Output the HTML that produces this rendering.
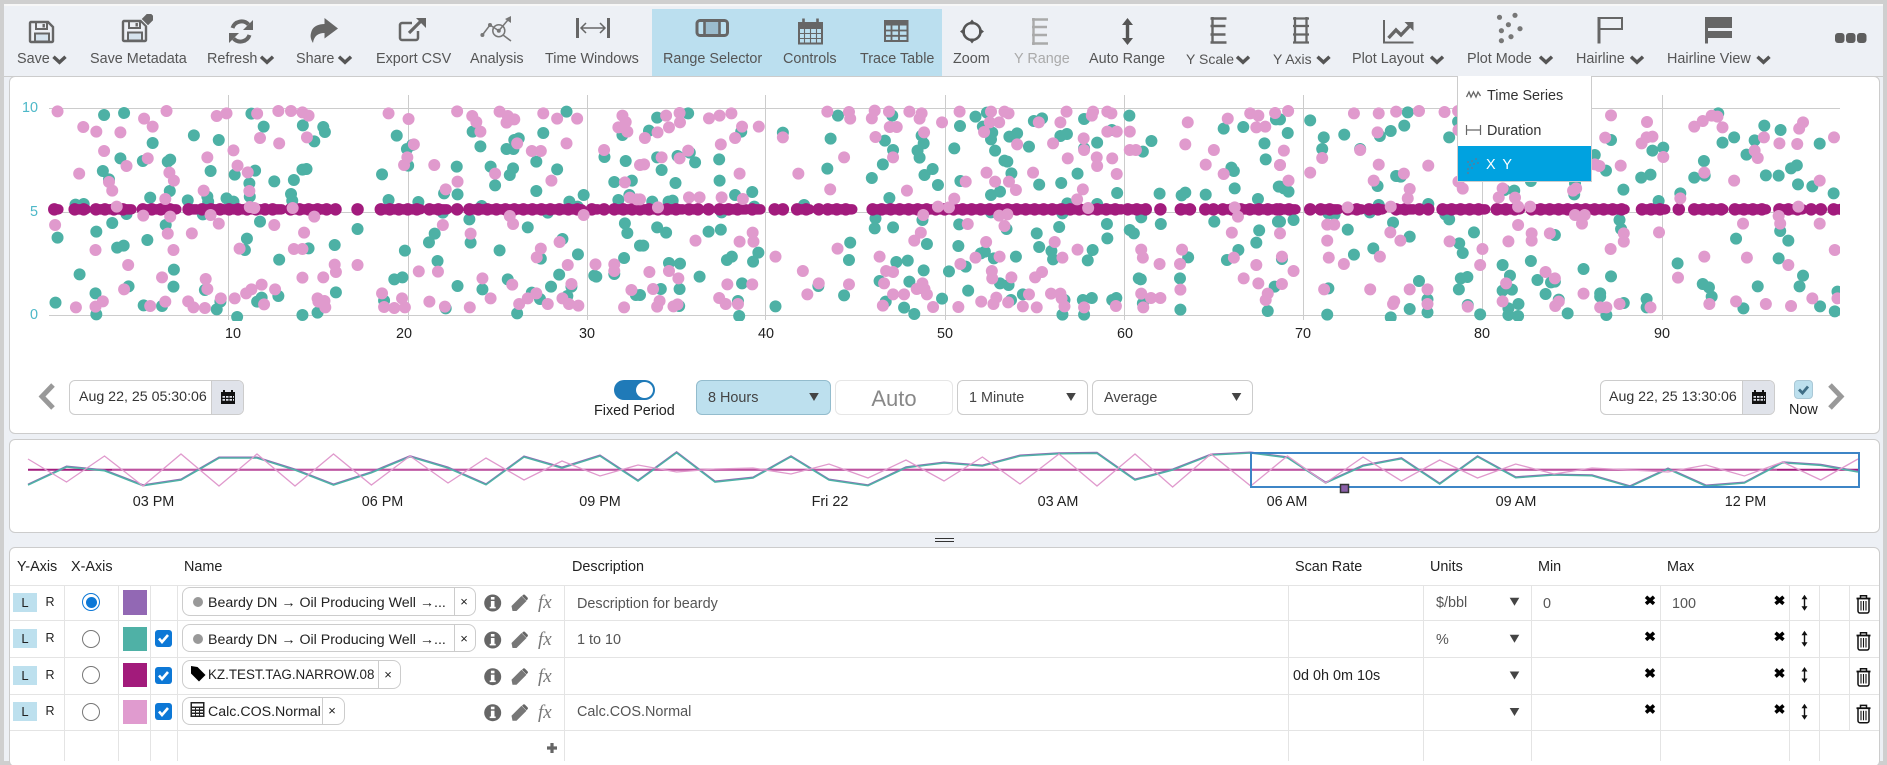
<!DOCTYPE html>
<html lang="en"><head><meta charset="utf-8"><title>Trend</title>
<style>
html,body{margin:0;padding:0;width:1887px;height:765px;overflow:hidden;background:#edf0f5}
body{position:relative;font-family:"Liberation Sans",sans-serif;font-size:14.4px;color:#222}
.a{position:absolute}
.t{position:absolute;white-space:nowrap;line-height:20px;height:20px}
.c{transform:translateX(-50%)}
.tb{color:#555}
.panel{position:absolute;background:#fff;border:1px solid #ccc;border-radius:6px;box-sizing:border-box}
.box{position:absolute;box-sizing:border-box;border:1px solid #ccc;border-radius:6px;background:#fff}
.vl{position:absolute;width:1px;background:#e4e4e4}
.hl{position:absolute;height:1px;left:10px;width:1869px;background:#e4e4e4}
.pill{position:absolute;box-sizing:border-box;border:1px solid #ccc;border-radius:8px;background:#fff;left:182px}
.L{position:absolute;left:13px;width:24px;height:19px;background:#bde0ee;text-align:center;line-height:19px;font-size:13px}
.R{position:absolute;left:45px;width:10px;height:19px;line-height:19px;font-size:12.5px;text-align:center}
.sw{position:absolute;left:123px;width:24px;height:24px}
.rad{position:absolute;left:82px;width:16px;height:16px;border:1.5px solid #777;border-radius:50%;background:#fff}
.cb{position:absolute;left:155px;width:17px;height:17px;border-radius:3px;background:#0d78d6}
.fx{position:absolute;left:538px;font:italic 19px "Liberation Serif",serif;color:#777;line-height:20px}
.g{color:#555}
</style></head><body>
<div class="a" style="left:0;top:0;width:1887px;height:4px;background:#cfcfcf"></div>
<div class="a" style="left:0;top:4px;width:1887px;height:2px;background:#f7f7f7"></div>
<div class="a" style="left:0;top:0;width:4px;height:765px;background:#cfcfcf"></div>
<div class="a" style="left:1883px;top:0;width:4px;height:765px;background:#cfcfcf"></div>
<div class="a" style="left:0;top:761px;width:1887px;height:4px;background:#cfcfcf"></div>
<div class="a" style="left:652px;top:9px;width:290px;height:67px;background:#bbdfef"></div>
<div class="a" style="left:4px;top:76px;width:1879px;height:1px;background:#ccc"></div>

<div class="panel" style="left:9px;top:76px;width:1871px;height:358px"></div>
<div class="panel" style="left:9px;top:439px;width:1871px;height:94px"></div>
<div class="panel" style="left:9px;top:547px;width:1871px;height:220px"></div>
<div class="a" style="left:935px;top:538px;width:19px;height:1px;background:#333"></div>
<div class="a" style="left:935px;top:541px;width:19px;height:1px;background:#333"></div>

<!-- toolbar labels -->
<span class="t tb" style="left:17px;top:49px">Save</span>
<span class="t tb" style="left:90px;top:49px">Save Metadata</span>
<span class="t tb" style="left:207px;top:49px">Refresh</span>
<span class="t tb" style="left:296px;top:49px">Share</span>
<span class="t tb" style="left:376px;top:49px">Export CSV</span>
<span class="t tb" style="left:470px;top:49px">Analysis</span>
<span class="t tb" style="left:545px;top:49px">Time Windows</span>
<span class="t tb" style="left:663px;top:49px">Range Selector</span>
<span class="t tb" style="left:783px;top:49px">Controls</span>
<span class="t tb" style="left:860px;top:49px">Trace Table</span>
<span class="t tb" style="left:953px;top:49px">Zoom</span>
<span class="t" style="left:1014px;top:49px;color:#aaa">Y Range</span>
<span class="t tb" style="left:1089px;top:49px">Auto Range</span>
<span class="t tb" style="left:1186px;top:49px;font-size:14px">Y Scale</span>
<span class="t tb" style="left:1273px;top:49px;font-size:14px">Y Axis</span>
<span class="t tb" style="left:1352px;top:49px">Plot Layout</span>
<span class="t tb" style="left:1467px;top:49px">Plot Mode</span>
<span class="t tb" style="left:1576px;top:49px">Hairline</span>
<span class="t tb" style="left:1667px;top:49px">Hairline View</span>

<!-- controls -->
<div class="box" style="left:69px;top:380px;width:175px;height:35px"></div>
<div class="a" style="left:211px;top:381px;width:32px;height:33px;background:#e0e3ea;border-left:1px solid #ccc;border-radius:0 5px 5px 0;box-sizing:border-box"></div>
<span class="t" style="left:79px;top:387px;color:#333;font-size:14.2px">Aug 22, 25 05:30:06</span>
<div class="a" style="left:614px;top:380px;width:41px;height:20px;background:#1f7ab8;border-radius:10px"></div>
<div class="a" style="left:636px;top:382px;width:17px;height:16px;background:#fff;border-radius:50%"></div>
<span class="t" style="left:594px;top:401px">Fixed Period</span>
<div class="box" style="left:696px;top:380px;width:135px;height:35px;background:#bde0ee;border-color:#93bccd"></div>
<span class="t" style="left:708px;top:388px;color:#444">8 Hours</span>
<div class="box" style="left:835px;top:380px;width:118px;height:35px;border-color:#e6e6e6"></div>
<span class="t c" style="left:894px;top:389px;color:#888;font-size:22px">Auto</span>
<div class="box" style="left:957px;top:380px;width:131px;height:35px"></div>
<span class="t" style="left:969px;top:388px;color:#444">1 Minute</span>
<div class="box" style="left:1092px;top:380px;width:161px;height:35px"></div>
<span class="t" style="left:1104px;top:388px;color:#444">Average</span>
<div class="box" style="left:1600px;top:380px;width:175px;height:35px"></div>
<div class="a" style="left:1742px;top:381px;width:32px;height:33px;background:#e0e3ea;border-left:1px solid #ccc;border-radius:0 5px 5px 0;box-sizing:border-box"></div>
<span class="t" style="left:1609px;top:387px;color:#333;font-size:14.2px">Aug 22, 25 13:30:06</span>
<div class="a" style="left:1794px;top:380px;width:19px;height:19px;background:#bde0ee;border:1px solid #aac8d6;border-radius:4px;box-sizing:border-box"></div>
<span class="t" style="left:1789px;top:400px">Now</span>

<!-- table -->
<div class="hl" style="top:585px"></div><div class="hl" style="top:620px"></div><div class="hl" style="top:657px"></div><div class="hl" style="top:694px"></div><div class="hl" style="top:730px"></div>
<div class="vl" style="left:64px;top:585px;height:176px"></div>
<div class="vl" style="left:118px;top:585px;height:176px"></div>
<div class="vl" style="left:150px;top:585px;height:176px"></div>
<div class="vl" style="left:177px;top:585px;height:176px"></div>
<div class="vl" style="left:564px;top:585px;height:176px"></div>
<div class="vl" style="left:1288px;top:585px;height:176px"></div>
<div class="vl" style="left:1423px;top:585px;height:176px"></div>
<div class="vl" style="left:1531px;top:585px;height:176px"></div>
<div class="vl" style="left:1660px;top:585px;height:176px"></div>
<div class="vl" style="left:1789px;top:585px;height:176px"></div>
<div class="vl" style="left:1819px;top:585px;height:176px"></div>
<div class="vl" style="left:1849px;top:585px;height:145px"></div>

<span class="t" style="left:17px;top:557px">Y-Axis</span>
<span class="t" style="left:71px;top:557px">X-Axis</span>
<span class="t" style="left:184px;top:557px">Name</span>
<span class="t" style="left:572px;top:557px">Description</span>
<span class="t" style="left:1295px;top:557px">Scan Rate</span>
<span class="t" style="left:1430px;top:557px">Units</span>
<span class="t" style="left:1538px;top:557px">Min</span>
<span class="t" style="left:1667px;top:557px">Max</span>

<div class="L" style="top:593px">L</div><div class="R" style="top:593px">R</div>
<div class="L" style="top:629px">L</div><div class="R" style="top:629px">R</div>
<div class="L" style="top:666px">L</div><div class="R" style="top:666px">R</div>
<div class="L" style="top:702px">L</div><div class="R" style="top:702px">R</div>

<div class="rad" style="top:593px;border-color:#0d78d6"></div>
<div class="a" style="left:86px;top:597px;width:11px;height:11px;background:#0d78d6;border-radius:50%"></div>
<div class="rad" style="top:630px"></div><div class="rad" style="top:666px"></div><div class="rad" style="top:703px"></div>

<div class="sw" style="top:590px;background:#9268b4;height:25px"></div>
<div class="sw" style="top:627px;background:#4fb1a6"></div>
<div class="sw" style="top:663px;background:#a21b7b"></div>
<div class="sw" style="top:700px;background:#e09bcf"></div>

<div class="cb" style="top:630px"></div><div class="cb" style="top:667px"></div><div class="cb" style="top:703px"></div>

<div class="pill" style="top:587px;width:294px;height:29px"></div>
<div class="pill" style="top:624px;width:294px;height:28px"></div>
<div class="pill" style="top:660px;width:219px;height:29px"></div>
<div class="pill" style="top:697px;width:163px;height:28px"></div>
<div class="vl" style="left:454px;top:588px;height:27px;background:#ccc"></div>
<div class="vl" style="left:454px;top:625px;height:26px;background:#ccc"></div>
<div class="vl" style="left:378px;top:661px;height:27px;background:#ccc"></div>
<div class="vl" style="left:322px;top:698px;height:26px;background:#ccc"></div>
<div class="a" style="left:193px;top:597px;width:10px;height:10px;background:#999;border-radius:50%"></div>
<div class="a" style="left:193px;top:634px;width:10px;height:10px;background:#999;border-radius:50%"></div>
<span class="t" style="left:208px;top:593px;font-size:14.2px">Beardy DN → Oil Producing Well →...</span>
<span class="t" style="left:208px;top:630px;font-size:14.2px">Beardy DN → Oil Producing Well →...</span>
<span class="t" style="left:208px;top:665px;font-size:13.4px">KZ.TEST.TAG.NARROW.08</span>
<span class="t" style="left:208px;top:702px;font-size:14.2px">Calc.COS.Normal</span>
<span class="t c" style="left:464px;top:592px;font-size:13px">×</span>
<span class="t c" style="left:464px;top:629px;font-size:13px">×</span>
<span class="t c" style="left:388px;top:665px;font-size:13px">×</span>
<span class="t c" style="left:332px;top:701px;font-size:13px">×</span>
<span class="fx" style="top:593px">fx</span><span class="fx" style="top:630px">fx</span><span class="fx" style="top:667px">fx</span><span class="fx" style="top:703px">fx</span>

<span class="t g" style="left:577px;top:594px">Description for beardy</span>
<span class="t g" style="left:577px;top:630px">1 to 10</span>
<span class="t g" style="left:577px;top:702px">Calc.COS.Normal</span>
<span class="t" style="left:1293px;top:666px">0d 0h 0m 10s</span>
<span class="t g" style="left:1436px;top:593px">$/bbl</span>
<span class="t g" style="left:1436px;top:630px">%</span>
<span class="t g" style="left:1543px;top:594px">0</span>
<span class="t g" style="left:1672px;top:594px">100</span>

<!-- graphics -->
<svg class="a" style="left:0;top:0" width="1887" height="765" viewBox="0 0 1887 765" xmlns="http://www.w3.org/2000/svg">
<defs>
<clipPath id="pc"><rect x="44" y="95" width="1796" height="226"/></clipPath>
<g id="floppy">
<path d="M31 22h17l5 5v14a1 1 0 0 1-1 1H31a1 1 0 0 1-1-1V23a1 1 0 0 1 1-1z" fill="#edf0f5" stroke="#666" stroke-width="2.4"/>
<path d="M36 22v7h11v-7" fill="none" stroke="#666" stroke-width="2"/><rect x="42.5" y="24" width="2.4" height="3.5" fill="#666"/>
<rect x="35" y="33.5" width="14" height="8" fill="#d6e3ee" stroke="#666" stroke-width="2"/>
</g>
<path id="cal" d="M0 3h2V1h2v2h6V1h2v2h2v12H0z M1.500 7v1.800h2.500V7z M5 7v1.800h2.500V7z M8.500 7v1.800H11V7z M12 7v1.800h1V7z M1.500 10v1.800h2.500V10z M5 10v1.800h2.500V10z M8.500 10v1.800H11V10z M12 10v1.800h1V10z" fill="#111" fill-rule="evenodd"/>
<g id="info"><circle r="8.500" fill="#666"/><rect x="-1.800" y="-2" width="3.600" height="7" fill="#fff"/><rect x="-1.800" y="-6" width="3.600" height="2.600" fill="#fff"/><rect x="-3" y="3.800" width="6" height="1.600" fill="#fff"/></g>
<g id="pencil"><path d="M-7 8L-8 3L2-7L7-2L-3 8Z" fill="#777"/><path d="M3.500-8a1.500 1.500 0 0 1 2 0L8-5.500a1.500 1.500 0 0 1 0 2L7-2.500L2.500-7z" fill="#666"/></g>
<path id="xx" d="M-4-3.500L4 3.500M4-3.500L-4 3.500" stroke="#000" stroke-width="3.500" fill="none"/>
<g id="ud"><rect x="-.7" y="-5" width="1.400" height="10" fill="#111"/><path d="M0-8L3-3.500H-3zM0 8L3 3.500H-3z" fill="#111"/></g>
<g id="trash" fill="none" stroke="#111"><path d="M-5.500-5.500V7a2 2 0 0 0 2 2h7a2 2 0 0 0 2-2V-5.500" stroke-width="1.500"/><path d="M-7-5.500H7" stroke-width="1.800"/><path d="M-3-6V-8.300H3V-6" stroke-width="1.500"/><path d="M-2.500-3V6.500M0-3V6.500M2.500-3V6.500" stroke-width="1.100"/></g>
<path id="chev" d="M-6-2.800L0 2.800L6-2.800" fill="none" stroke="#555" stroke-width="3.400"/>
<path id="caret" d="M-4.800-4H4.800L0 4z" fill="#444"/>
<path id="chk" d="M-4.500 0L-1.500 3.500L4.500-3.500" fill="none" stroke="#fff" stroke-width="2.600"/>
<g id="band" fill="none">
<path transform="translate(0,80) scale(.40816,.33333)" vector-effect="non-scaling-stroke" d="M133 388H143M183 388H210M235 388H322M350 388H432M462 388H482M495 388H650M668 388H690M712 388H805M822 388h1M876 388h1M933 388H1030M1052 388H1095M1120 388h1M1150 388H1425M1450 388H1465M1480 388h1M1505 388H1568"/>
<path transform="translate(640,80) scale(.40816,.33333)" vector-effect="non-scaling-stroke" d="M0 388H105M120 388H145M168 388h1M195 388H260M275 388H295M330 388h1M350 388h1M385 388H415M438 388h1M460 388H520M570 388H1000M1010 388H1180M1195 388H1240M1275 388h1M1325 388H1350M1385 388h1M1405 388h1M1428 388H1568"/>
<path transform="translate(1280,80) scale(.38715,.33333)" vector-effect="non-scaling-stroke" d="M0 388H40M78 388h1M105 388H150M175 388H210M230 388H265M300 388H345M360 388h1M383 388h1M420 388H530M560 388H620M650 388H890M935 388H995M1030 388h1M1070 388H1145M1175 388H1255M1290 388H1350M1372 388h1M1397 388h1M1430 388H1460"/>
</g>
</defs>

<!-- icons -->
<use href="#floppy"/>
<use href="#floppy" x="93" y="-1"/>
<path d="M141 19L146.500 13.500H151.500L153.500 15.500V20.500L148 26z" fill="#666" stroke="#edf0f5" stroke-width="1"/>
<g fill="none" stroke="#666" stroke-width="4"><path d="M232.500 28a9.500 9.500 0 0 1 16-3.500"/><path d="M249.500 35a9.500 9.500 0 0 1-16 3.500"/></g>
<path d="M253 20v10h-10zM229 43V33h10z" fill="#666"/>
<path d="M324.500 18L338 28.500L324.500 38.500V33C318 33 314 36 313 43C310 38 310 35 312 30C314 26 319 24 324.500 24Z" fill="#666"/>
<path d="M412 23H402a2 2 0 0 0-2 2V38a2 2 0 0 0 2 2H416a2 2 0 0 0 2-2V31" fill="none" stroke="#666" stroke-width="2.500"/>
<path d="M409 33L421 21" stroke="#666" stroke-width="3.200"/><path d="M416 18H426V28Z" fill="#666"/>
<g fill="none" stroke="#777" stroke-width="1.500"><circle cx="498.800" cy="30.700" r="6"/><path d="M482.400 35L490 25L498.800 30.700L510 17.500M503 35L511 41"/></g>
<g fill="#777"><circle cx="482.400" cy="35" r="2"/><circle cx="490" cy="25" r="2"/><circle cx="498.800" cy="30.700" r="2"/><path d="M511 16V23L505 19z"/></g>
<path d="M577.500 18V38M608.500 18V38" stroke="#666" stroke-width="3"/>
<path d="M581 28H605M586 23L581 28L586 33M600 23L605 28L600 33" fill="none" stroke="#666" stroke-width="1.500"/>
<rect x="704.500" y="21" width="15" height="14" fill="#9bbccd"/>
<rect x="697" y="20.500" width="30.500" height="15" rx="3" fill="none" stroke="#666" stroke-width="3"/>
<path d="M704.500 20V36M719.500 20V36" stroke="#666" stroke-width="2.600"/>
<rect x="799" y="23" width="23" height="20.500" fill="none" stroke="#666" stroke-width="2"/><rect x="798" y="23" width="25" height="6" fill="#666"/>
<path d="M803.500 18.500V25M817.500 18.500V25" stroke="#666" stroke-width="2.600"/>
<path d="M804.500 29V43M810.500 29V43M816.500 29V43M799 33.500H822M799 38.500H822" stroke="#666" stroke-width="1.100"/>
<rect x="885" y="21" width="22.500" height="20" fill="none" stroke="#666" stroke-width="2"/><rect x="884" y="20" width="24" height="5.500" fill="#666"/>
<path d="M891.500 25V41M899 25V41M885 30.500H907.500M885 35.800H907.500" stroke="#666" stroke-width="1.800"/>
<circle cx="972" cy="31.500" r="8.500" fill="none" stroke="#555" stroke-width="2.600"/>
<path d="M972 19.500l4 5h-8zM972 43.500l4-5h-8zM960 31.500l5-4v8zM984 31.500l-5-4v8z" fill="#555"/>
<path d="M1033.500 18V45M1032 19.500H1048M1032 27H1047M1032 35H1047M1032 43.500H1048" stroke="#aaa" stroke-width="2.400" fill="none"/>
<path d="M1127.500 23V40" stroke="#555" stroke-width="3.400"/><path d="M1127.500 18l5.500 7h-11zM1127.500 45l5.500-7h-11z" fill="#555"/>
<path d="M1212.500 17V43.500M1210.500 18.500H1226.500M1210.500 26H1225.500M1210.500 34.500H1225.500M1210.500 42.500H1226.500" stroke="#666" stroke-width="2.400" fill="none"/>
<path d="M1295 17V43.500M1306.500 17V43.500M1293 18.500H1309M1293 26H1309M1293 34.500H1309M1293 42.500H1309" stroke="#666" stroke-width="2.300" fill="none"/>
<path d="M1384 20V42.500H1413.500" stroke="#666" stroke-width="2" fill="none"/>
<path d="M1388.500 38L1396 30L1401 35L1410 25.500" stroke="#666" stroke-width="3.400" fill="none"/><path d="M1404.500 22H1413.500V31Z" fill="#666"/>
<g fill="#777"><circle cx="1499.500" cy="17.300" r="2.600"/><circle cx="1515" cy="15.300" r="2.600"/><circle cx="1508.400" cy="24.700" r="2.600"/><circle cx="1520" cy="28.700" r="2.600"/><circle cx="1501.400" cy="30.700" r="2.600"/><circle cx="1511" cy="36.700" r="2.600"/><circle cx="1501.400" cy="40.700" r="2.600"/></g>
<path d="M1599 17V43.500" stroke="#666" stroke-width="3"/><rect x="1599" y="18" width="23" height="11" fill="none" stroke="#666" stroke-width="2"/>
<path d="M1706.500 17V43.500" stroke="#666" stroke-width="3"/><rect x="1705" y="17" width="27" height="11" fill="#666"/><rect x="1705" y="31" width="27" height="7" fill="#666"/>
<use href="#chev" x="59.500" y="59.500"/><use href="#chev" x="267" y="59.500"/><use href="#chev" x="345" y="59.500"/><use href="#chev" x="1243" y="59.500"/><use href="#chev" x="1323.500" y="59.500"/><use href="#chev" x="1437" y="59.500"/><use href="#chev" x="1546" y="59.500"/><use href="#chev" x="1637" y="59.500"/><use href="#chev" x="1763.500" y="59.500"/>
<rect x="1835" y="33" width="9.500" height="10" rx="3" fill="#5e5e5e"/><rect x="1846" y="33" width="9.500" height="10" rx="3" fill="#5e5e5e"/><rect x="1857" y="33" width="9.500" height="10" rx="3" fill="#5e5e5e"/>

<!-- plot -->
<g stroke="#ccc" stroke-width="1" fill="none">
<path d="M49 108.500H1840M49 212.500H1840M49 315.500H1840"/>
<path d="M228.500 95V320M408.500 95V320M587.500 95V320M765.500 95V320M945.500 95V320M1124.500 95V320M1303.500 95V320M1482.500 95V320M1662.500 95V320"/>
</g>
<g clip-path="url(#pc)" fill="none" stroke-linecap="round" stroke-width="12">
<g stroke="#4db1a5">
<path transform="translate(0,80) scale(.40816,.33333)" vector-effect="non-scaling-stroke" d="M255 105h0M304 99h0M616 101h0M646 140h0M742 136h0M792 141h0M796 156h0M770 184h0M475 166h0M536 180h0M374 189h0M295 235h0M350 243h0M411 245h0M417 239h0M252 273h0M267 298h0M516 273h0M575 284h0M625 272h0M611 310h0M672 304h0M720 300h0M741 269h0M751 267h0M416 333h0M368 353h0M460 361h0M508 350h0M510 365h0M555 355h0M572 365h0M612 350h0M713 342h0M716 362h0M185 374h0M205 372h0M310 402h0M275 429h0M236 455h0M406 435h0M497 403h0M637 425h0M141 473h0M361 480h0M287 503h0M303 497h0M605 476h0M600 510h0M756 505h0M820 495h0M684 539h0M195 583h0M426 569h0M315 619h0M425 620h0M502 630h0M234 640h0M641 653h0M630 665h0M682 648h0M823 637h0M136 668h0M352 676h0M397 678h0M531 688h0M540 665h0M236 703h0M581 711h0M741 705h0M778 698h0M972 167h0M997 207h0M1010 195h0M1000 257h0M936 283h0M952 360h0M1025 366h0M1088 340h0M1121 343h0M1119 260h0M1158 155h0M1177 199h0M1241 207h0M1258 207h0M1260 180h0M1271 175h0M1331 159h0M1388 95h0M1202 260h0M1257 265h0M1249 285h0M1213 316h0M1314 245h0M1314 333h0M1365 268h0M1430 345h0M1395 365h0M1180 378h0M1150 418h0M1293 442h0M1065 461h0M1051 487h0M1153 488h0M1224 511h0M1072 543h0M1378 477h0M1416 523h0M1325 536h0M1370 584h0M966 598h0M986 592h0M1244 598h0M1121 618h0M1182 628h0M1303 638h0M1323 657h0M1350 620h0M1400 620h0M1390 648h0M941 662h0M1092 685h0M1267 700h0M992 512h0M876 447h0M1085 398h0M1342 398h0M1415 380h0M1525 165h0M1533 243h0M1481 231h0M1548 302h0M1505 306h0M1515 360h0M1542 345h0M1531 430h0M1537 459h0M1568 497h0M1529 534h0M1456 587h0M1461 590h0M1505 582h0M1558 645h0"/>
<path transform="translate(640,80) scale(.40816,.33333)" vector-effect="non-scaling-stroke" d="M118 100h0M42 113h0M22 152h0M485 107h0M618 107h0M784 138h0M822 110h0M850 98h0M985 115h0M965 123h0M1088 117h0M1199 107h0M1156 150h0M350 158h0M467 176h0M248 155h0M690 167h0M695 190h0M680 212h0M620 210h0M600 182h0M770 205h0M840 140h0M863 158h0M860 178h0M905 170h0M924 160h0M870 212h0M953 200h0M1030 168h0M1046 162h0M1120 188h0M1088 205h0M1253 183h0M1232 215h0M1430 146h0M1478 141h0M1530 190h0M1533 238h0M1558 118h0M42 232h0M92 228h0M122 218h0M135 247h0M53 270h0M194 238h0M195 302h0M87 309h0M233 345h0M275 336h0M459 266h0M595 253h0M685 233h0M568 294h0M717 267h0M697 285h0M730 315h0M785 303h0M893 242h0M900 245h0M910 280h0M860 345h0M882 335h0M978 314h0M1032 309h0M1072 281h0M1169 339h0M1273 341h0M1327 346h0M1336 338h0M1386 344h0M1449 263h0M1455 273h0M1457 325h0M1514 357h0M1565 320h0M30 365h0M70 365h0M80 362h0M280 380h0M402 375h0M611 354h0M1047 370h0M1120 372h0M200 397h0M1035 400h0M860 397h0M577 415h0M692 420h0M1228 412h0M575 445h0M620 442h0M782 433h0M42 442h0M64 458h0M168 455h0M198 449h0M898 447h0M972 460h0M1027 441h0M1144 432h0M1145 475h0M1200 450h0M1210 460h0M1276 432h0M1407 425h0M1563 425h0M1517 451h0M8 497h0M515 488h0M703 492h0M780 498h0M978 501h0M1510 488h0M290 518h0M225 530h0M213 540h0M277 545h0M512 540h0M656 542h0M628 546h0M867 535h0M845 515h0M835 520h0M921 530h0M1008 513h0M1012 538h0M1097 541h0M1109 510h0M1343 532h0M1466 510h0M1438 540h0M71 549h0M98 551h0M146 590h0M695 571h0M757 574h0M798 560h0M1222 595h0M1227 598h0M1323 595h0M51 627h0M97 627h0M250 610h0M587 603h0M660 605h0M804 632h0M882 610h0M903 615h0M1555 620h0M0 645h0M437 618h0M500 646h0M240 663h0M96 678h0M602 665h0M740 656h0M909 660h0M938 643h0M1040 660h0M1085 660h0M1107 654h0M1157 660h0M1167 654h0M1232 670h0M332 679h0M647 683h0M672 702h0M1324 689h0M1538 693h0M243 708h0M1035 704h0M1088 704h0"/>
<path transform="translate(1280,80) scale(.38715,.33333)" vector-effect="non-scaling-stroke" d="M0 118h0M78 121h0M20 159h0M113 172h0M109 207h0M166 164h0M258 168h0M286 153h0M321 137h0M330 97h0M437 172h0M460 125h0M207 207h0M1132 100h0M1251 137h0M1293 150h0M1143 188h0M1173 172h0M1226 181h0M1394 191h0M1205 224h0M990 203h0M962 212h0M855 180h0M252 318h0M300 288h0M312 290h0M10 325h0M22 335h0M0 320h0M1095 243h0M1320 265h0M1335 256h0M1070 293h0M1097 287h0M933 293h0M957 284h0M842 272h0M813 225h0M1255 286h0M1288 287h0M1338 313h0M1375 319h0M1430 340h0M887 329h0M648 303h0M605 332h0M580 330h0M762 310h0M760 343h0M1034 340h0M978 363h0M383 372h0M255 375h0M232 397h0M125 400h0M141 403h0M35 420h0M0 425h0M292 428h0M175 449h0M427 403h0M437 418h0M501 457h0M335 470h0M710 465h0M877 420h0M881 447h0M1178 476h0M1292 453h0M1313 482h0M463 490h0M472 519h0M241 505h0M191 524h0M5 537h0M1027 550h0M1288 535h0M648 543h0M575 555h0M784 567h0M1351 587h0M594 587h0M855 589h0M467 595h0M484 591h0M665 600h0M700 607h0M710 605h0M359 603h0M1092 612h0M1108 622h0M1234 619h0M1342 619h0M125 625h0M462 628h0M575 632h0M599 629h0M827 640h0M827 650h0M686 642h0M1115 650h0M1440 635h0M381 658h0M616 672h0M720 659h0M947 657h0M947 682h0M888 669h0M1197 685h0M1395 679h0M381 697h0M335 687h0M122 704h0M286 712h0M485 675h0M517 703h0M590 685h0M590 705h0M615 708h0M743 700h0M843 705h0M1433 694h0"/>
</g>
<g stroke="#a21b7d">
<use href="#band" stroke-width="10.500"/>
<use href="#band" stroke-width="12.500" stroke-dasharray="0 9"/>
</g>
<g stroke="#e09acd">
<path transform="translate(0,80) scale(.40816,.33333)" vector-effect="non-scaling-stroke" d="M141 94h0M204 141h0M236 155h0M255 213h0M295 157h0M353 116h0M374 140h0M408 93h0M531 108h0M555 100h0M630 101h0M682 93h0M713 93h0M741 97h0M756 107h0M752 172h0M637 174h0M684 190h0M572 211h0M508 232h0M362 235h0M310 258h0M194 281h0M415 278h0M426 302h0M582 257h0M607 277h0M267 306h0M275 332h0M499 332h0M611 333h0M405 357h0M286 380h0M612 381h0M623 384h0M717 384h0M351 407h0M417 410h0M516 405h0M770 410h0M135 435h0M536 431h0M672 435h0M411 461h0M470 460h0M745 458h0M234 510h0M425 510h0M587 506h0M720 507h0M741 507h0M314 555h0M397 592h0M504 597h0M741 593h0M792 592h0M820 554h0M823 576h0M876 555h0M641 614h0M616 628h0M603 640h0M508 627h0M304 628h0M674 628h0M541 655h0M575 655h0M252 664h0M234 680h0M186 682h0M368 678h0M405 665h0M461 664h0M474 682h0M502 684h0M647 673h0M778 655h0M795 663h0M780 665h0M797 682h0M952 100h0M1001 117h0M1120 94h0M1157 108h0M1167 126h0M1177 155h0M1224 95h0M1244 108h0M1241 128h0M1260 118h0M1331 100h0M1365 116h0M1414 116h0M1388 190h0M1267 190h0M1014 193h0M998 232h0M990 255h0M1064 255h0M1213 281h0M1121 305h0M1092 328h0M1303 213h0M1325 213h0M1351 302h0M1249 408h0M1257 432h0M1085 435h0M1153 461h0M1430 405h0M1371 486h0M1325 506h0M1315 532h0M1391 555h0M1026 574h0M1073 575h0M1182 595h0M1255 614h0M1400 612h0M936 640h0M1314 640h0M1202 655h0M985 655h0M1293 655h0M1378 655h0M1052 665h0M941 681h0M966 684h0M992 682h0M1090 680h0M1151 682h0M1272 672h0M1342 672h0M1394 672h0M1417 677h0M1480 210h0M1525 107h0M1533 126h0M1515 142h0M1537 155h0M1568 255h0M1531 307h0M1543 353h0M1560 358h0M1459 553h0M1505 553h0M1505 573h0M1547 630h0M1529 682h0"/>
<path transform="translate(640,80) scale(.40816,.33333)" vector-effect="non-scaling-stroke" d="M64 107h0M97 99h0M98 127h0M71 142h0M43 157h0M12 174h0M169 115h0M195 107h0M224 100h0M250 140h0M233 174h0M198 193h0M291 140h0M350 172h0M459 95h0M512 96h0M515 116h0M575 92h0M568 115h0M610 95h0M660 95h0M690 100h0M685 116h0M740 127h0M612 141h0M629 141h0M696 157h0M577 171h0M783 95h0M860 95h0M893 95h0M903 100h0M857 127h0M880 127h0M843 156h0M977 127h0M1045 95h0M1110 95h0M1107 107h0M1145 95h0M1155 100h0M1030 127h0M1145 155h0M1168 155h0M1087 175h0M1012 190h0M924 193h0M1342 127h0M1440 116h0M1495 100h0M1515 107h0M1556 99h0M1510 142h0M1532 140h0M1200 155h0M1200 210h0M1215 210h0M1336 193h0M1406 210h0M1088 210h0M53 232h0M97 235h0M118 212h0M10 253h0M244 281h0M388 281h0M500 232h0M620 232h0M1048 235h0M1119 232h0M1120 258h0M1157 235h0M1386 254h0M1168 282h0M1430 282h0M1568 255h0M849 278h0M963 278h0M798 305h0M870 305h0M904 305h0M921 330h0M466 328h0M654 332h0M1085 328h0M120 352h0M146 352h0M200 352h0M252 357h0M0 358h0M770 356h0M1071 358h0M730 380h0M757 382h0M44 382h0M1098 384h0M1457 382h0M694 405h0M1465 410h0M880 407h0M900 403h0M803 432h0M893 438h0M688 458h0M1450 458h0M276 458h0M136 482h0M244 485h0M278 485h0M672 482h0M848 486h0M1016 486h0M484 506h0M1072 509h0M1228 509h0M1328 509h0M332 530h0M587 530h0M822 533h0M881 530h0M1035 533h0M1232 533h0M1455 533h0M1273 552h0M1323 552h0M1510 555h0M785 552h0M23 576h0M71 573h0M399 573h0M603 573h0M620 576h0M862 573h0M985 576h0M94 595h0M863 595h0M910 592h0M968 592h0M1479 595h0M214 613h0M275 613h0M438 610h0M512 613h0M598 610h0M692 610h0M1515 610h0M32 627h0M678 627h0M697 627h0M1324 629h0M410 643h0M620 643h0M647 643h0M703 643h0M873 653h0M953 643h0M1007 641h0M1030 641h0M1033 655h0M1228 641h0M1252 654h0M1275 654h0M1538 641h0M1533 660h0M194 654h0M48 663h0M42 680h0M82 679h0M92 673h0M210 672h0M240 672h0M595 677h0M718 681h0M780 681h0M836 665h0M866 672h0M902 667h0M938 679h0M972 682h0M1040 679h0M1088 682h0M1166 678h0M1233 682h0"/>
<path transform="translate(1280,80) scale(.38715,.33333)" vector-effect="non-scaling-stroke" d="M21 93h0M191 100h0M255 100h0M300 95h0M359 93h0M425 96h0M460 93h0M855 106h0M948 126h0M1070 140h0M1092 123h0M1115 107h0M1130 110h0M1143 142h0M1351 127h0M1341 146h0M1290 190h0M1250 172h0M1336 192h0M1431 172h0M934 190h0M947 172h0M962 170h0M840 173h0M252 157h0M461 150h0M10 212h0M207 210h0M109 234h0M1226 212h0M1234 234h0M990 231h0M255 254h0M383 257h0M880 257h0M813 253h0M825 258h0M78 278h0M0 255h0M320 281h0M242 302h0M22 302h0M1096 278h0M1394 302h0M1173 302h0M461 305h0M472 326h0M575 325h0M335 327h0M330 355h0M565 352h0M607 353h0M765 325h0M757 332h0M1034 355h0M615 380h0M646 380h0M286 380h0M175 382h0M1339 380h0M762 405h0M787 405h0M780 431h0M1288 408h0M1292 431h0M615 435h0M1196 431h0M1394 431h0M122 434h0M140 434h0M285 457h0M0 460h0M697 460h0M650 460h0M979 457h0M438 484h0M122 482h0M311 482h0M590 484h0M650 482h0M888 460h0M888 485h0M523 507h0M854 507h0M1433 510h0M1096 530h0M1206 533h0M258 530h0M126 533h0M5 530h0M165 552h0M517 555h0M1313 555h0M35 573h0M686 576h0M1028 593h0M710 595h0M584 610h0M5 612h0M114 628h0M233 628h0M335 628h0M381 628h0M1440 655h0M1375 655h0M784 641h0M295 664h0M292 672h0M381 672h0M575 664h0M720 665h0M711 678h0M827 682h0M843 682h0M877 672h0M957 682h0M1109 672h0M1178 664h0M1255 672h0M1320 678h0M485 680h0"/>
</g>
</g>

<!-- controls graphics -->
<path d="M53 385L42 396.500L53 408" fill="none" stroke="#999" stroke-width="5"/>
<path d="M1830 385L1841 396.500L1830 408" fill="none" stroke="#999" stroke-width="5"/>
<use href="#cal" x="221" y="389"/><use href="#cal" x="1752" y="389"/>
<use href="#caret" x="814" y="397"/><use href="#caret" x="1071" y="397"/><use href="#caret" x="1236.500" y="397"/>
<path d="M1799 389.500L1802.500 393L1808 386.500" fill="none" stroke="#3f6e86" stroke-width="2.800"/>

<!-- overview -->
<path d="M28 469.700H1858" stroke="#a21b7d" stroke-width="2" fill="none"/>
<path d="M112 469.700H1777" stroke="#e09acd" stroke-width="2" stroke-opacity=".45" fill="none"/>
<polyline fill="none" stroke="#9268b4" stroke-width="1.400" transform="translate(0,-.8)" points="28,485 66.500,467 104.500,470.700 143,485.700 181,480 219,458 257,458 295,470 333.500,485 371.400,472.700 410,456.700 448,468 486,484.700 524,457 562,468 600,456 638,481 676.600,452.700 715,482 753,478 791,456.700 829,480 868,485.700 906,467.700 944,463 982.400,466 1020,456 1059,453.700 1097,453.300 1135,480 1172.600,470 1211,455 1250.700,453 1287.400,457.700 1325.600,483 1363,466 1401.500,458.700 1439.700,484 1477.500,456.700 1515.700,477.700 1554,475 1592,475.700 1630,486.700 1668,469 1706,486 1744.400,483 1782.600,462.700 1820.800,465.300 1858,472"/>
<polyline fill="none" stroke="#4fb1a6" stroke-width="1.600" points="28,485 66.500,467 104.500,470.700 143,485.700 181,480 219,458 257,458 295,470 333.500,485 371.400,472.700 410,456.700 448,468 486,484.700 524,457 562,468 600,456 638,481 676.600,452.700 715,482 753,478 791,456.700 829,480 868,485.700 906,467.700 944,463 982.400,466 1020,456 1059,453.700 1097,453.300 1135,480 1172.600,470 1211,455 1250.700,453 1287.400,457.700 1325.600,483 1363,466 1401.500,458.700 1439.700,484 1477.500,456.700 1515.700,477.700 1554,475 1592,475.700 1630,486.700 1668,469 1706,486 1744.400,483 1782.600,462.700 1820.800,465.300 1858,472"/>
<polyline fill="none" stroke="#e09acd" stroke-width="1.300" points="28,459 66.500,482 104.500,456 143,486 181,454 219,486 257,454 295,486 333.500,454 371.400,485 410,456 448,483 486,458 524,480 562,461 600,476 638,465 676.600,472 715,469 753,468 791,474 829,464 868,478 906,460 944,481 982.400,457 1020,484 1059,454 1097,486 1135,454 1172.600,487 1211,454 1250.700,486 1287.400,456 1325.600,483 1363,457 1401.500,481 1439.700,460 1477.500,478 1515.700,464 1554,474 1592,468 1630,470 1668,472 1706,465 1744.400,476 1782.600,462 1820.800,480 1858,459"/>
<rect x="1251" y="453" width="608" height="34" fill="none" stroke="#3d85c6" stroke-width="2"/>
<rect x="1340.500" y="484.500" width="8" height="8" fill="#8a5fa8" stroke="#333" stroke-width="1.500"/>

<!-- table icons -->
<g><use href="#chk" x="163.500" y="638.500"/><use href="#chk" x="163.500" y="675.500"/><use href="#chk" x="163.500" y="711.500"/></g>
<path d="M191 666V673.500L199 681.500L205.500 675L197.500 667Z" fill="#000"/>
<g transform="translate(0,4.500)"><rect x="190.500" y="697.500" width="14" height="15" fill="#222"/><rect x="192" y="699" width="11" height="3" fill="#fff"/><path d="M192 703.500h3v1.500h-3zM196 703.500h3v1.500h-3zM200 703.500h3v1.500h-3zM192 706.500h3v1.500h-3zM196 706.500h3v1.500h-3zM200 706.500h3v1.500h-3zM192 709.500h3v1.500h-3zM196 709.500h3v1.500h-3zM200 709.500h3v1.500h-3z" fill="#fff"/></g>
<use href="#info" x="492.700" y="603"/><use href="#info" x="492.700" y="640"/><use href="#info" x="492.700" y="676.700"/><use href="#info" x="492.700" y="712.700"/>
<use href="#pencil" x="519.500" y="603"/><use href="#pencil" x="519.500" y="640"/><use href="#pencil" x="519.500" y="676.700"/><use href="#pencil" x="519.500" y="712.700"/>
<path d="M552 743V753M547 748H557" stroke="#666" stroke-width="3.200"/>
<use href="#caret" x="1514.500" y="601.700"/><use href="#caret" x="1514.500" y="638.700"/><use href="#caret" x="1514.500" y="675.500"/><use href="#caret" x="1514.500" y="712"/>
<use href="#xx" x="1650" y="600.300"/><use href="#xx" x="1650" y="636.300"/><use href="#xx" x="1650" y="673"/><use href="#xx" x="1650" y="709"/>
<use href="#xx" x="1779.500" y="600.300"/><use href="#xx" x="1779.500" y="636.300"/><use href="#xx" x="1779.500" y="673"/><use href="#xx" x="1779.500" y="709"/>
<use href="#ud" x="1804.500" y="602.700"/><use href="#ud" x="1804.500" y="638.700"/><use href="#ud" x="1804.500" y="675"/><use href="#ud" x="1804.500" y="711.700"/>
<use href="#trash" x="1863.500" y="604"/><use href="#trash" x="1863.500" y="641"/><use href="#trash" x="1863.500" y="677"/><use href="#trash" x="1863.500" y="713.700"/>
</svg>

<!-- plot labels -->
<span class="t" style="right:1849px;top:98px;color:#4db8c8">10</span>
<span class="t" style="right:1849px;top:202px;color:#4db8c8">5</span>
<span class="t" style="right:1849px;top:305px;color:#4db8c8">0</span>
<span class="t c" style="left:233px;top:324px">10</span>
<span class="t c" style="left:404px;top:324px">20</span>
<span class="t c" style="left:587px;top:324px">30</span>
<span class="t c" style="left:766px;top:324px">40</span>
<span class="t c" style="left:945px;top:324px">50</span>
<span class="t c" style="left:1125px;top:324px">60</span>
<span class="t c" style="left:1303px;top:324px">70</span>
<span class="t c" style="left:1482px;top:324px">80</span>
<span class="t c" style="left:1662px;top:324px">90</span>

<span class="t c" style="left:153.500px;top:492px">03 PM</span>
<span class="t c" style="left:382.500px;top:492px">06 PM</span>
<span class="t c" style="left:600px;top:492px">09 PM</span>
<span class="t c" style="left:830px;top:492px">Fri 22</span>
<span class="t c" style="left:1058px;top:492px">03 AM</span>
<span class="t c" style="left:1287px;top:492px">06 AM</span>
<span class="t c" style="left:1516px;top:492px">09 AM</span>
<span class="t c" style="left:1745.500px;top:492px">12 PM</span>

<!-- dropdown -->
<div class="a" style="left:1457px;top:76px;width:135px;height:106px;background:#fff;border:1px solid #ccc;box-sizing:border-box;border-top:0"></div>
<div class="a" style="left:1458px;top:146px;width:133px;height:35px;background:#00a2e0"></div>
<span class="t" style="left:1487px;top:86px;color:#333">Time Series</span>
<span class="t" style="left:1487px;top:121px;color:#333">Duration</span>
<span class="t" style="left:1486px;top:155px;color:#fff;letter-spacing:1.5px">X Y</span>
<svg class="a" style="left:1460px;top:85px" width="26" height="90" viewBox="0 0 26 90">
<path d="M6.500 12L9 7L11 12L13.500 7L16 12L18 7L20.500 11" fill="none" stroke="#666" stroke-width="1.300"/>
<path d="M6.500 40V50M20.500 40V50M6.500 45H20.500" fill="none" stroke="#666" stroke-width="1.200"/>
<g fill="#557f9c"><circle cx="8" cy="77" r="1"/><circle cx="12" cy="76" r="1"/><circle cx="16" cy="74" r="1"/><circle cx="10" cy="80" r="1"/><circle cx="14" cy="79" r="1"/><circle cx="18" cy="78" r="1"/><circle cx="8" cy="84" r="1"/><circle cx="12" cy="83" r="1"/><circle cx="8" cy="88" r="1"/></g>
</svg>
</body></html>
